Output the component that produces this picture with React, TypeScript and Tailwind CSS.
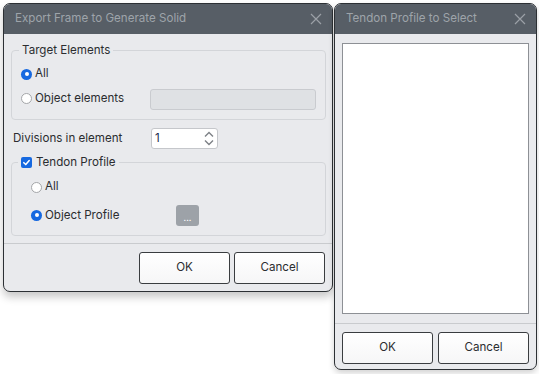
import React from "react";

const font = { fontFamily: "Inter, 'Noto Sans', sans-serif" };

function Radio({ checked }: { checked?: boolean }) {
  return checked ? (
    <span className="flex h-[11px] w-[11px] shrink-0 items-center justify-center rounded-full bg-[#1769e0]">
      <span className="h-[4px] w-[4px] rounded-full bg-white" />
    </span>
  ) : (
    <span className="h-[11px] w-[11px] shrink-0 rounded-full border border-[#a4a6a9] bg-white" />
  );
}

function Check() {
  return (
    <span className="flex h-[11px] w-[11px] shrink-0 items-center justify-center rounded-[2px] bg-[#1769e0]">
      <svg width="9" height="9" viewBox="0 0 10 10">
        <path d="M2 5.2 L4.2 7.3 L8 2.8" fill="none" stroke="white" strokeWidth="1.7" strokeLinecap="round" strokeLinejoin="round" />
      </svg>
    </span>
  );
}

function CloseX() {
  return (
    <svg width="12" height="12" viewBox="0 0 12 12">
      <path d="M1 1 L11 11 M11 1 L1 11" stroke="#9ba0a6" strokeWidth="1.2" />
    </svg>
  );
}

function Btn({ children }: { children: React.ReactNode }) {
  return (
    <button className="flex h-[32px] w-[91px] items-center justify-center rounded-[3px] border border-[#3a3d40] bg-gradient-to-b from-white to-[#f6f6f7] text-[11.6px] text-[#2b2d30]">
      {children}
    </button>
  );
}

function TitleBar({ title }: { title: string }) {
  return (
    <div className="flex h-[30px] shrink-0 items-center justify-between bg-[#575e66] pl-[11px] pr-[10px]">
      <span className="text-[11.6px] text-[#9ea4aa]">{title}</span>
      <CloseX />
    </div>
  );
}

export default function App() {
  return (
    <div className="relative h-[374px] w-[539px] overflow-hidden bg-white text-[11.6px] text-[#2b2d30]" style={font}>
      {/* Main dialog */}
      <div className="absolute left-[3px] top-[3px] flex h-[289px] w-[330px] flex-col overflow-hidden rounded-[7px] border border-[#2c3034] bg-[#e9eaed] shadow-[0_5px_8px_rgba(0,0,0,0.22)]">
        <TitleBar title="Export Frame to Generate Solid" />
        <div className="flex flex-1 flex-col">
          <div className="px-[7px] pr-[6px] pt-[8px]">
            <fieldset className="rounded-[4px] border border-[#d3d5d9] p-0">
              <legend className="ml-[7px] px-[3px] leading-[16px]">Target Elements</legend>
              <div className="pb-[10px] pl-[9px] pr-[9px] pt-[6px]">
                <div className="flex h-[20px] items-center gap-[3px]">
                  <Radio checked />
                  <span>All</span>
                </div>
                <div className="mt-[5px] flex h-[20px] items-center">
                  <div className="flex items-center gap-[3px]">
                    <Radio />
                    <span>Object elements</span>
                  </div>
                  <div className="ml-auto h-[21px] w-[166px] rounded-[3px] border border-[#c9cbcf] bg-[#dfe1e4]" />
                </div>
              </div>
            </fieldset>
            <div className="mt-[8px] flex h-[21px] items-center">
              <span className="ml-[2px] w-[138px]">Divisions in element</span>
              <div className="flex h-[21px] w-[67px] items-center justify-between rounded-[3px] border border-[#c5c7cb] bg-white pl-[3px] pr-[2px]">
                <span className="text-[#1b2a4a]">1</span>
                <svg width="12" height="17" viewBox="0 0 12 17">
                  <path d="M2 6.5 L6 2.5 L10 6.5" fill="none" stroke="#7d8186" strokeWidth="1.4" />
                  <path d="M2 10.5 L6 14.5 L10 10.5" fill="none" stroke="#7d8186" strokeWidth="1.4" />
                </svg>
              </div>
            </div>
            <fieldset className="mt-[5px] rounded-[4px] border border-[#d3d5d9] p-0">
              <legend className="ml-[6px] flex items-center gap-[4px] px-[3px] leading-[16px]">
                <Check />
                <span>Tendon Profile</span>
              </legend>
              <div className="pb-[9px] pl-[19px] pr-[9px] pt-[7px]">
                <div className="flex h-[20px] items-center gap-[3px]">
                  <Radio />
                  <span>All</span>
                </div>
                <div className="mt-[8px] flex h-[21px] items-center">
                  <div className="flex w-[145px] items-center gap-[3px]">
                    <Radio checked />
                    <span>Object Profile</span>
                  </div>
                  <div className="flex h-[21px] w-[23px] items-center justify-center rounded-[3px] bg-[#9da2a8] pt-[3px] text-[9px] leading-none text-white">
                    ...
                  </div>
                </div>
              </div>
            </fieldset>
          </div>
          <div className="mt-[7px] h-px bg-[#c9cbce]" />
          <div className="mt-[8px] flex justify-end gap-[4px] pr-[7px]">
            <Btn>OK</Btn>
            <Btn>Cancel</Btn>
          </div>
        </div>
      </div>

      {/* Second dialog */}
      <div className="absolute left-[334px] top-[3px] flex h-[367px] w-[203px] flex-col overflow-hidden rounded-[7px] border border-[#2c3034] bg-[#e9eaed] shadow-[0_3px_6px_rgba(0,0,0,0.18)]">
        <TitleBar title="Tendon Profile to Select" />
        <div className="flex flex-1 flex-col">
          <div className="mx-[7px] mt-[9px] h-[271px] border border-[#8d9095] bg-white" />
          <div className="mt-[9px] h-px bg-[#c9cbce]" />
          <div className="mt-[8px] flex justify-center gap-[5px]">
            <Btn>OK</Btn>
            <Btn>Cancel</Btn>
          </div>
        </div>
      </div>
    </div>
  );
}
